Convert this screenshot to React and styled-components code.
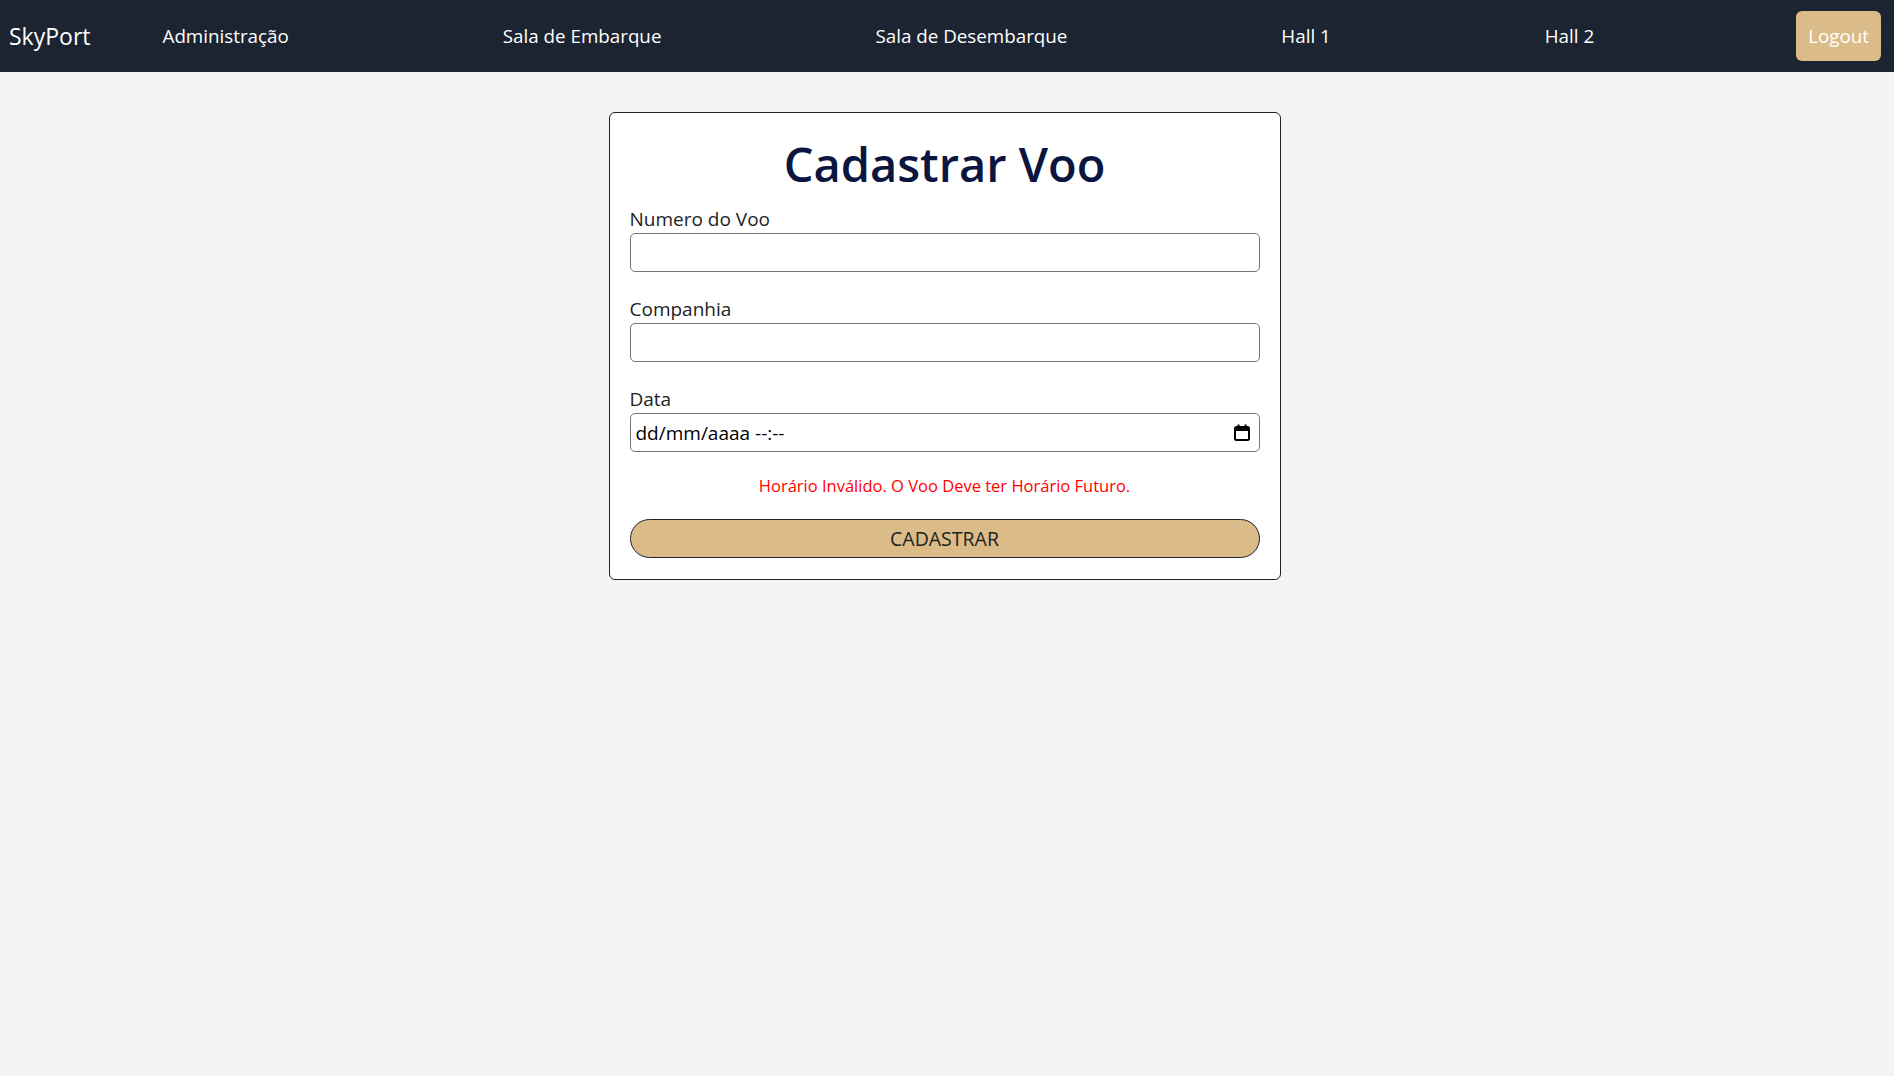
import React from 'react'
import styled, {createGlobalStyle} from 'styled-components'

const Global = createGlobalStyle`
body {
  margin: 0;
  background: #f4f4f4;
  font-family: "Open Sans", "Noto Sans", sans-serif;
}
* { box-sizing: border-box; }
`

const Nav = styled.nav`
display: flex;
align-items: center;
height: 72px;
padding: 0 13px 0 9px;
background: #1b2430;
`
const Brand = styled.a`
color: #fff;
font-size: 23px;
text-decoration: none;
margin-right: 72px;
`
const Links = styled.div`
display: flex;
gap: 214px;
flex: 1;
`
const NavLink = styled.a`
color: #fff;
font-size: 18.8px;
text-decoration: none;
`
const LogoutButton = styled.button`
height: 50px;
padding: 0 12px;
border: none;
border-radius: 6px;
background: #dbbb88;
color: #fff;
font-family: inherit;
font-size: 18.8px;
cursor: pointer;
`

const Main = styled.main`
display: flex;
justify-content: center;
padding: 40px 5px 0 0;
`
const Card = styled.form`
width: 672px;
padding: 19px 20px 21px;
background: #fff;
border: 1px solid #1b2430;
border-radius: 6px;
display: flex;
flex-direction: column;
`
const Title = styled.h1`
margin: 0 0 11px;
text-align: center;
font-size: 47px;
font-weight: 600;
color: #0b1640;
`
const Field = styled.div`
display: flex;
flex-direction: column;
margin-bottom: 25px;
`
const Label = styled.label`
font-size: 19px;
color: #222;
line-height: 24px;
margin-bottom: 2px;
`
const InputBox = styled.div`
position: relative;
`
const Input = styled.input`
width: 100%;
height: 39px;
padding: 0 5px;
border: 1px solid #767676;
border-radius: 5px;
font-family: inherit;
font-size: 19px;
color: #000;
&::placeholder { color: #000; }
`
const PickerIcon = styled.svg`
position: absolute;
right: 10px;
top: 11px;
`
const ErrorText = styled.p`
margin: -3px 0 22px;
text-align: center;
color: #ff0000;
font-size: 16.5px;
`
const SubmitButton = styled.button`
height: 39px;
border: 1px solid #1b2430;
border-radius: 20px;
background: #dbbb88;
color: #222;
font-family: inherit;
font-size: 19.5px;
cursor: pointer;
`

function CalendarIcon() {
    return (
        <PickerIcon width="16" height="17" viewBox="0 0 16 17">
            <rect x="1" y="3" width="14" height="13" rx="1.5" fill="none" stroke="#000" strokeWidth="2"/>
            <rect x="1" y="3" width="14" height="4" fill="#000"/>
            <rect x="3.5" y="0.5" width="2" height="3" fill="#000"/>
            <rect x="10.5" y="0.5" width="2" height="3" fill="#000"/>
        </PickerIcon>
    )
}

export default function App() {
    return (
        <>
            <Global/>
            <Nav>
                <Brand href="#">SkyPort</Brand>
                <Links>
                    <NavLink href="#">Administração</NavLink>
                    <NavLink href="#">Sala de Embarque</NavLink>
                    <NavLink href="#">Sala de Desembarque</NavLink>
                    <NavLink href="#">Hall 1</NavLink>
                    <NavLink href="#">Hall 2</NavLink>
                </Links>
                <LogoutButton>Logout</LogoutButton>
            </Nav>
            <Main>
                <Card onSubmit={e => e.preventDefault()}>
                    <Title>Cadastrar Voo</Title>
                    <Field>
                        <Label>Numero do Voo</Label>
                        <Input type="text"/>
                    </Field>
                    <Field>
                        <Label>Companhia</Label>
                        <Input type="text"/>
                    </Field>
                    <Field>
                        <Label>Data</Label>
                        <InputBox>
                            <Input type="text" placeholder="dd/mm/aaaa --:--"/>
                            <CalendarIcon/>
                        </InputBox>
                    </Field>
                    <ErrorText>Horário Inválido. O Voo Deve ter Horário Futuro.</ErrorText>
                    <SubmitButton type="submit">CADASTRAR</SubmitButton>
                </Card>
            </Main>
        </>
    )
}
